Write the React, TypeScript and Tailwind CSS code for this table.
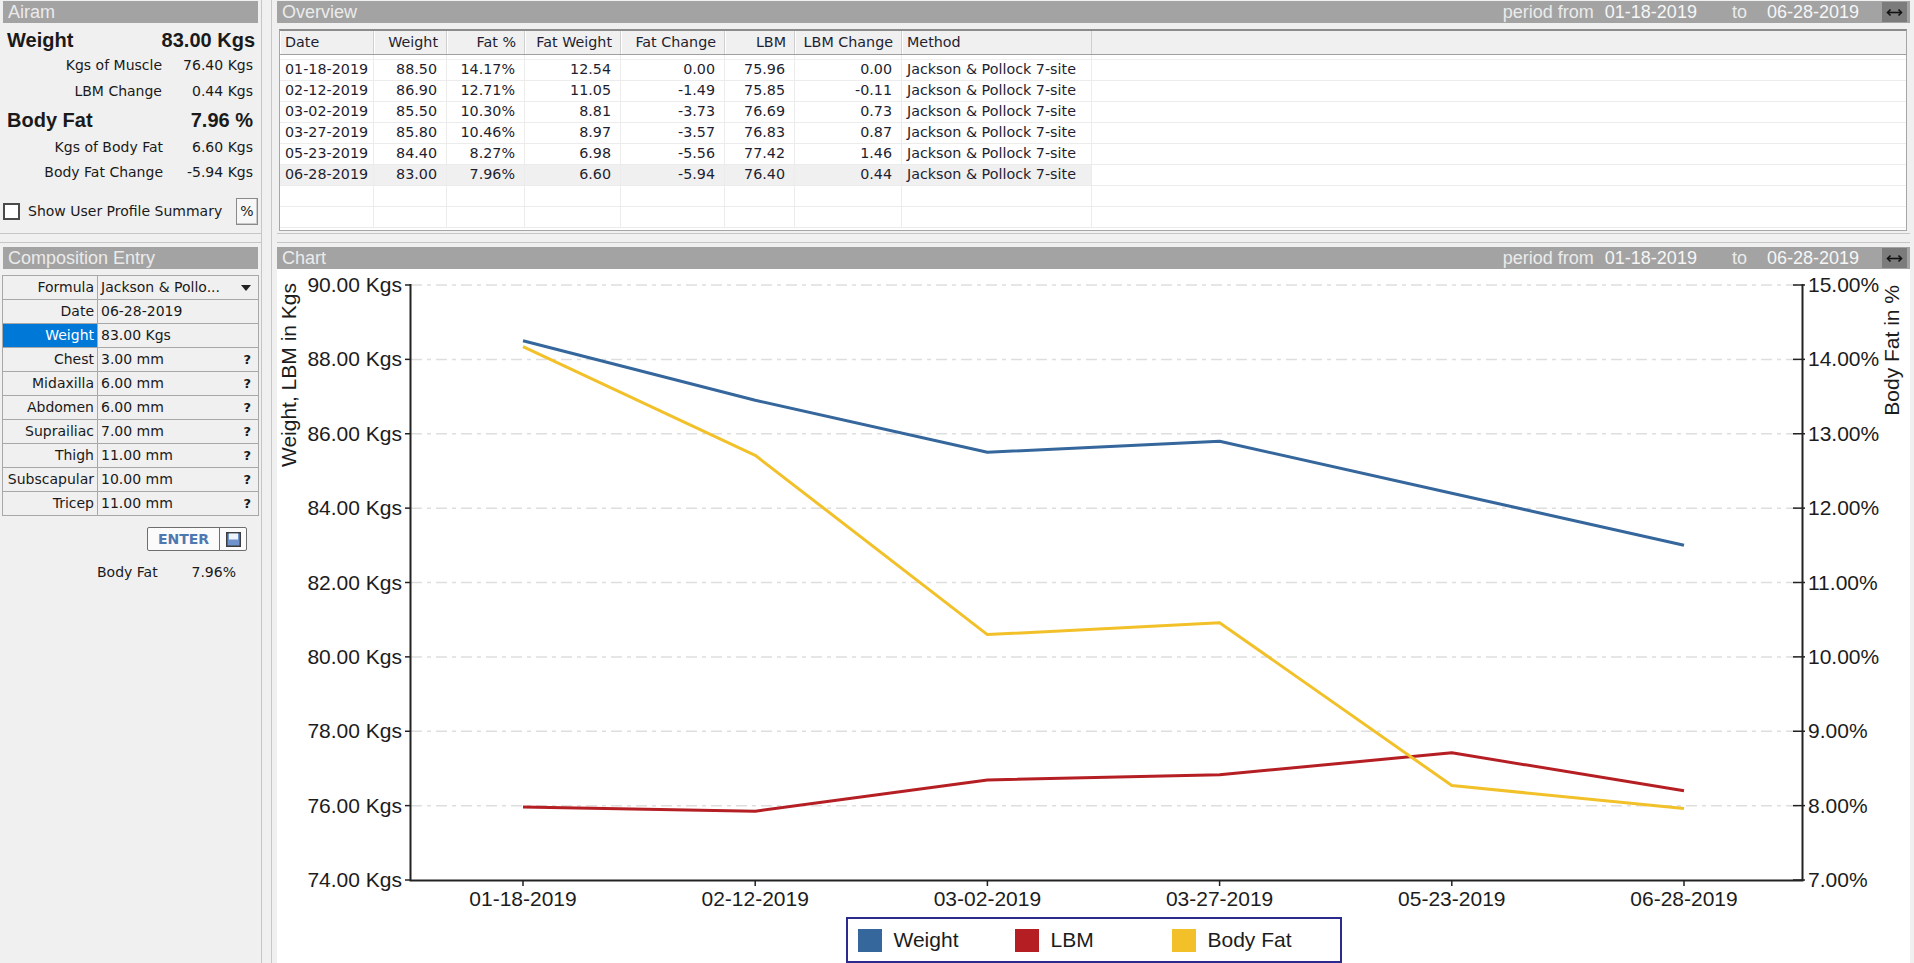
import { FC } from "react";

const rows = [
  ["01-18-2019", "88.50", "14.17%", "12.54", "0.00", "75.96", "0.00"],
  ["02-12-2019", "86.90", "12.71%", "11.05", "-1.49", "75.85", "-0.11"],
  ["03-02-2019", "85.50", "10.30%", "8.81", "-3.73", "76.69", "0.73"],
  ["03-27-2019", "85.80", "10.46%", "8.97", "-3.57", "76.83", "0.87"],
  ["05-23-2019", "84.40", "8.27%", "6.98", "-5.56", "77.42", "1.46"],
  ["06-28-2019", "83.00", "7.96%", "6.60", "-5.94", "76.40", "0.44"],
];

const cols = [
  { name: "Date", w: "w-[94px]", left: true },
  { name: "Weight", w: "w-[73px]" },
  { name: "Fat %", w: "w-[78px]" },
  { name: "Fat Weight", w: "w-[96px]" },
  { name: "Fat Change", w: "w-[104px]" },
  { name: "LBM", w: "w-[70px]" },
  { name: "LBM Change", w: "w-[107px]" },
  { name: "Method", w: "w-[190px]", left: true },
];

const entry = [
  ["Formula", "Jackson & Pollo...", "drop"],
  ["Date", "06-28-2019", ""],
  ["Weight", "83.00 Kgs", "sel"],
  ["Chest", "3.00 mm", "?"],
  ["Midaxilla", "6.00 mm", "?"],
  ["Abdomen", "6.00 mm", "?"],
  ["Suprailiac", "7.00 mm", "?"],
  ["Thigh", "11.00 mm", "?"],
  ["Subscapular", "10.00 mm", "?"],
  ["Tricep", "11.00 mm", "?"],
];

const dates = ["01-18-2019", "02-12-2019", "03-02-2019", "03-27-2019", "05-23-2019", "06-28-2019"];
const weight = [88.5, 86.9, 85.5, 85.8, 84.4, 83.0];
const lbm = [75.96, 75.85, 76.69, 76.83, 77.42, 76.4];
const fat = [14.17, 12.71, 10.3, 10.46, 8.27, 7.96];

// chart coordinates: origin is the top-left of the white chart body
const xAt = (i: number) => 246 + 232.2 * i;
const yKg = (v: number) => 16 + (90 - v) * 37.1875;
const yPct = (v: number) => 16 + (15 - v) * 74.375;
const pts = (vals: number[], f: (v: number) => number) =>
  vals.map((v, i) => `${xAt(i)},${f(v).toFixed(1)}`).join(" ");

const ArrowBox: FC = () => (
  <div className="ml-[23px] mr-[3px] w-[25px] h-[20px] bg-[#7c7c7c] flex items-center justify-center">
    <svg width="17" height="9" viewBox="0 0 17 9">
      <path d="M2 4.5h13" stroke="#111" strokeWidth="1.6" />
      <path d="M4.5 1.5L1.5 4.5L4.5 7.5M12.5 1.5L15.5 4.5L12.5 7.5" stroke="#111" strokeWidth="1.6" fill="none" />
    </svg>
  </div>
);

const PanelHeader: FC<{ title: string; period?: boolean }> = ({ title, period }) => (
  <div className="h-[22px] shrink-0 bg-[#a3a3a3] flex items-center pl-[5px] text-[18px] text-[#ebebeb] font-['Liberation_Sans',sans-serif] leading-none">
    <span>{title}</span>
    {period && (
      <div className="ml-auto flex items-center h-full">
        <span>period from</span>
        <span className="ml-[11px] text-[#f6f6f6]">01-18-2019</span>
        <span className="ml-[35px]">to</span>
        <span className="ml-[20px] text-[#f6f6f6]">06-28-2019</span>
        <ArrowBox />
      </div>
    )}
  </div>
);

const Chart: FC = () => {
  const kgTicks = [90, 88, 86, 84, 82, 80, 78, 76, 74];
  const pctTicks = [15, 14, 13, 12, 11, 10, 9, 8, 7];
  return (
    <svg width="1633" height="646" className="block shrink-0">
      <g fontFamily="'Liberation Sans', Arial, sans-serif" fill="#1c1c1c">
        {kgTicks.slice(0, -1).map((t) => (
          <line
            key={t}
            x1="134"
            x2="1525"
            y1={yKg(t)}
            y2={yKg(t)}
            stroke="#dedede"
            strokeWidth="1.5"
            strokeDasharray="11 5 4 5"
          />
        ))}
        <text transform="translate(19 14) rotate(-90)" fontSize="21" textAnchor="end">
          Weight, LBM in Kgs
        </text>
        <text transform="translate(1622 16) rotate(-90)" fontSize="21" textAnchor="end">
          Body Fat in %
        </text>
        {kgTicks.map((t) => (
          <g key={t}>
            <line x1="128" x2="134" y1={yKg(t)} y2={yKg(t)} stroke="#222" strokeWidth="1.5" />
            <text x="125" y={yKg(t) + 7} fontSize="21" textAnchor="end">
              {t.toFixed(2)} Kgs
            </text>
          </g>
        ))}
        {pctTicks.map((t) => (
          <g key={t}>
            <line x1="1516" x2="1528" y1={yPct(t)} y2={yPct(t)} stroke="#222" strokeWidth="1.5" />
            <text x="1531" y={yPct(t) + 7} fontSize="21">
              {t.toFixed(2)}%
            </text>
          </g>
        ))}
        <path d="M133.5 15V611.5H1525.5V15" stroke="#222" strokeWidth="2" fill="none" />
        {dates.map((d, i) => (
          <g key={d}>
            <line x1={xAt(i)} x2={xAt(i)} y1="611" y2="617" stroke="#222" strokeWidth="1.5" />
            <text x={xAt(i)} y="637" fontSize="21" textAnchor="middle">
              {d}
            </text>
          </g>
        ))}
      </g>
      <polyline points={pts(weight, yKg)} fill="none" stroke="#35679c" strokeWidth="3" strokeLinejoin="round" />
      <polyline points={pts(lbm, yKg)} fill="none" stroke="#b51f23" strokeWidth="3" strokeLinejoin="round" />
      <polyline points={pts(fat, yPct)} fill="none" stroke="#f2c12a" strokeWidth="3" strokeLinejoin="round" />
    </svg>
  );
};

const Legend: FC = () => (
  <div className="mt-[2px] mx-auto w-[496px] h-[46px] border-2 border-[#2b2b8e] flex items-center pl-[10px] font-['Liberation_Sans',sans-serif] text-[21px] text-[#1c1c1c]">
    {[
      ["Weight", "bg-[#35679c]"],
      ["LBM", "bg-[#b51f23]"],
      ["Body Fat", "bg-[#f2c12a]"],
    ].map(([n, c]) => (
      <div key={n} className="w-[157px] flex items-center gap-[12px]">
        <div className={`w-[24px] h-[23px] ${c}`} />
        <span>{n}</span>
      </div>
    ))}
  </div>
);

const Sidebar: FC = () => (
  <aside className="w-[262px] shrink-0 border-r border-[#c6c6c6] flex flex-col pt-[1px] text-[14px] text-[#1a1a1a] font-['DejaVu_Sans',sans-serif]">
    <div className="mx-[3px]">
      <PanelHeader title="Airam" />
    </div>
    <div className="mt-[5px] h-[24px] flex items-center justify-between pl-[7px] pr-[6px] font-['Liberation_Sans',sans-serif] font-bold text-[20px]">
      <span>Weight</span>
      <span>83.00 Kgs</span>
    </div>
    {[
      ["Kgs of Muscle", "76.40 Kgs", "h-[26px]"],
      ["LBM Change", "0.44 Kgs", "h-[26px]"],
    ].map(([a, b, h]) => (
      <div key={a} className={`${h} grid grid-cols-[162px_1fr] items-center pr-[8px]`}>
        <span className="text-right">{a}</span>
        <span className="text-right">{b}</span>
      </div>
    ))}
    <div className="mt-[2px] h-[28px] flex items-center justify-between pl-[7px] pr-[8px] font-['Liberation_Sans',sans-serif] font-bold text-[20px]">
      <span>Body Fat</span>
      <span>7.96 %</span>
    </div>
    {[
      ["Kgs of Body Fat", "6.60 Kgs", "h-[26px]"],
      ["Body Fat Change", "-5.94 Kgs", "h-[24px]"],
    ].map(([a, b, h]) => (
      <div key={a} className={`${h} grid grid-cols-[163px_1fr] items-center pr-[8px]`}>
        <span className="text-right">{a}</span>
        <span className="text-right">{b}</span>
      </div>
    ))}
    <div className="mt-[12px] h-[30px] flex items-center pl-[3px] pr-[3px]">
      <div className="w-[17px] h-[17px] border-2 border-[#4a4a4a] bg-white" />
      <span className="ml-[8px]">Show User Profile Summary</span>
      <div className="ml-auto w-[22px] h-[27px] border border-[#8a8a8a] bg-[#f7f7f7] shadow-[inset_-1px_-1px_0_#c8c8c8] flex items-center justify-center text-[14px]">
        %
      </div>
    </div>
    <div className="mt-[7px] h-[10px] border-y border-[#c6c6c6]" />
    <div className="mt-[4px] mx-[3px]">
      <PanelHeader title="Composition Entry" />
    </div>
    <div className="mt-[6px] mx-[2px] border-t border-l border-r border-[#a8a8a8]">
      {entry.map(([label, value, kind]) => (
        <div key={label} className="h-[24px] flex border-b border-[#a8a8a8]">
          <div
            className={`w-[95px] border-r border-[#a8a8a8] flex items-center justify-end pr-[3px] ${
              kind === "sel" ? "bg-[#0078d7] text-white" : ""
            }`}
          >
            {label}
          </div>
          <div className="flex-1 flex items-center pl-[3px] pr-[7px]">
            <span>{value}</span>
            {kind === "?" && <span className="ml-auto font-bold text-[13px]">?</span>}
            {kind === "drop" && (
              <svg className="ml-auto" width="10" height="6" viewBox="0 0 10 6">
                <path d="M0 0h10L5 6z" fill="#222" />
              </svg>
            )}
          </div>
        </div>
      ))}
    </div>
    <div className="mt-[11px] ml-[147px] w-[100px] h-[24px] flex border border-[#6e6e6e] rounded-[2px] bg-[#fbfbfb]">
      <div className="w-[72px] flex items-center justify-center font-bold text-[14px] text-[#4f77b0] border-r border-[#6e6e6e]">
        ENTER
      </div>
      <div className="flex-1 flex items-center justify-center">
        <svg width="15" height="15" viewBox="0 0 15 15">
          <rect x="0.75" y="0.75" width="13.5" height="13.5" fill="#6f93cc" stroke="#3d3d3d" strokeWidth="1.5" />
          <rect x="3" y="1.5" width="9" height="6" fill="#eef2f9" />
        </svg>
      </div>
    </div>
    <div className="mt-[11px] h-[20px] flex items-center">
      <span className="ml-[97px]">Body Fat</span>
      <span className="ml-auto mr-[25px]">7.96%</span>
    </div>
  </aside>
);

const Overview: FC = () => (
  <div className="mt-[6px] ml-[2px] mr-[3px] h-[202px] shrink-0 bg-white border border-[#a6a6a6] border-t-2 border-t-[#8c8c8c] flex flex-col font-['DejaVu_Sans',sans-serif] text-[14.3px] text-[#1e1e30] overflow-hidden">
    <div className="h-[24px] shrink-0 flex bg-[#f0f0f0] border-b border-[#a0a0a0]">
      {cols.map((c) => (
        <div
          key={c.name}
          className={`${c.w} shrink-0 flex items-center border-r border-[#cfcfcf] shadow-[inset_1px_0_0_#ffffff] ${
            c.left ? "pl-[5px]" : "justify-end pr-[8px]"
          }`}
        >
          {c.name}
        </div>
      ))}
      <div className="flex-1" />
    </div>
    <div className="h-[5px] shrink-0 flex border-b border-[#efefef]">
      {cols.map((c) => (
        <div key={c.name} className={`${c.w} shrink-0 border-r border-[#ededed]`} />
      ))}
    </div>
    {[...rows, null, null].map((r, ri) => (
      <div key={ri} className="h-[21px] shrink-0 flex border-b border-[#ececec]">
        {cols.map((c, ci) => (
          <div
            key={c.name}
            className={`${c.w} shrink-0 flex items-center border-r border-[#ececec] ${
              c.left ? "pl-[5px]" : "justify-end pr-[9px]"
            } ${ri === 5 ? "bg-[#f0f0f0]" : ""}`}
          >
            {r ? (ci === 7 ? "Jackson & Pollock 7-site" : r[ci]) : ""}
          </div>
        ))}
        <div className="flex-1" />
      </div>
    ))}
  </div>
);

export default function App() {
  return (
    <div className="w-[1914px] h-[963px] bg-[#f0f0f0] flex overflow-hidden">
      <Sidebar />
      <div className="w-[9px] shrink-0" />
      <main className="flex-1 min-w-0 border-l border-[#c6c6c6] pl-[5px] pr-[4px] pt-[1px] flex flex-col">
        <PanelHeader title="Overview" period />
        <Overview />
        <div className="mt-[2px] h-[10px] shrink-0 border-y border-[#c6c6c6]" />
        <div className="mt-[4px]">
          <PanelHeader title="Chart" period />
        </div>
        <div className="flex-1 bg-white flex flex-col overflow-hidden">
          <Chart />
          <Legend />
        </div>
      </main>
    </div>
  );
}
